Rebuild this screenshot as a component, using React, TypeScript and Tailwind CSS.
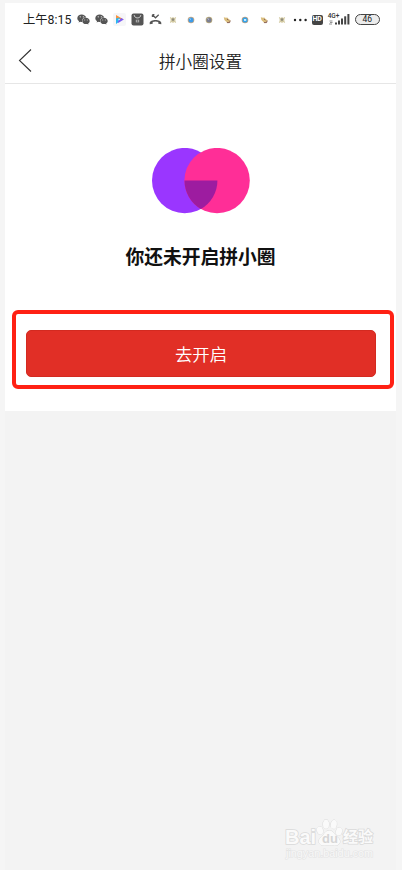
import { FaWeixin } from "react-icons/fa";

const notifications = [
  { id: 1, main: "#c9bd8a", accent: "#8f8b7c", shape: "flower" },
  { id: 2, main: "#3d9be9", accent: "#c9a983", shape: "dot" },
  { id: 3, main: "#7c7f92", accent: "#b9aa7c", shape: "dot" },
  { id: 4, main: "#d9bd7c", accent: "#8a6156", shape: "shell" },
  { id: 5, main: "#2fa4ee", accent: "#b79f86", shape: "ring" },
  { id: 6, main: "#d9bd7c", accent: "#8a6156", shape: "shell" },
  { id: 7, main: "#c9bd8a", accent: "#8f8b7c", shape: "flower" },
];

const NotificationIcon = ({ main, accent, shape }: { main: string; accent: string; shape: string }) => (
  <svg viewBox="0 0 8 8" className="h-2 w-2">
    {shape === "flower" && (
      <>
        <path d="M1.2 1.5 6.8 6.5M6.8 1.5 1.2 6.5M4 1v6M1.2 4h5.6" stroke={main} strokeWidth="1.2" opacity=".8" />
        <circle cx="4" cy="3.6" r="1.3" fill={accent} />
      </>
    )}
    {(shape === "dot" || shape === "ring") && (
      <>
        <circle cx="4" cy="4" r="3.3" fill={accent} />
        <circle cx="4" cy="4" r="2.5" fill={main} />
        {shape === "ring" ? (
          <rect x="3" y="3.2" width="2.2" height="1.5" fill="#fff" />
        ) : (
          <path d="M2.5 2.5 4 3.5" stroke="#fff" strokeWidth=".8" opacity=".7" />
        )}
      </>
    )}
    {shape === "shell" && (
      <>
        <path d="M.8 1.2 3 1.8 4.4 1.4 5.2 3 3 5.4 1.4 4Z" fill={main} />
        <path d="M2.6 4.6 5 2.4 7.4 4.2 6.6 6.8 3.6 6.6Z" fill={main} />
        <path d="M4 3 5.4 4M4 6.6h2.6L7.2 4.6" fill="none" stroke={accent} strokeWidth="1" />
      </>
    )}
  </svg>
);

const StatusBar = () => {
  return (
    <div className="flex h-[33px] items-center pl-[18px]">
      <span className="w-[54px] shrink-0 pt-[2px] whitespace-nowrap text-[12.3px] leading-none text-[#222]">上午8:15</span>
      <div className="flex shrink-0 items-center">
        <span className="flex w-[18px]">
          <FaWeixin className="h-[13px] w-[13px] text-[#555]" />
        </span>
        <span className="flex w-[18px]">
          <FaWeixin className="h-[13px] w-[13px] text-[#555]" />
        </span>
        <span className="flex w-[18px]">
          <svg viewBox="0 0 13 13" className="h-[13px] w-[13px]">
            <rect width="13" height="13" rx="2" fill="#f6f6f8" />
            <path d="M3 2v4L10.8 6.5Z" fill="#fb923c" />
            <path d="M3 5.5V11L6.5 8.6V4.6Z" fill="#2cb5ee" />
            <path d="M5 8.2 8.3 5 10.8 6.5 5.2 10Z" fill="#7c5cf0" />
            <path d="M5.5 5.8 7 6.6 5.5 7.6Z" fill="#fff" />
          </svg>
        </span>
        <span className="flex w-[18px]">
          <svg viewBox="0 0 13 13" className="h-[13px] w-[13px]">
            <rect x=".5" y=".5" width="12" height="12" rx="2" fill="#555" />
            <path d="M3.2 2.2c.4 3.6 6.2 3.6 6.6 0" fill="none" stroke="#ddd" strokeWidth="1" />
            <path d="M4.8 6.7h3.4v2.7H4.8Z" fill="#aaa" />
            <path d="M6.5 6.7v2.7" stroke="#666" strokeWidth=".7" />
          </svg>
        </span>
        <span className="flex w-[15px]">
          <svg viewBox="0 0 13 13" className="h-[13px] w-[13px] shrink-0">
            <path d="M3.4 1.7v2.2M3.4 1.7h2M3.6 2 6.5 4.8 9.7 1.8" fill="none" stroke="#555" strokeWidth="1.2" />
            <path d="M.7 9.9c0-4 11.6-4 11.6 0v1.3l-3-.4V8.9c-1.6-.7-4-.7-5.6 0v1.9l-3 .4Z" fill="#555" />
          </svg>
        </span>
        {notifications.map((item) => (
          <span key={item.id} className="flex w-[18.1px] justify-center">
            <NotificationIcon main={item.main} accent={item.accent} shape={item.shape} />
          </span>
        ))}
      </div>
      <svg viewBox="0 0 14 4" className="ml-[2px] h-1 w-[14px] shrink-0" fill="#222">
        <circle cx="2" cy="2" r="1.2" />
        <circle cx="7.3" cy="2" r="1.2" />
        <circle cx="12.6" cy="2" r="1.2" />
      </svg>
      <span className="ml-[5px] flex h-[10px] w-[11px] shrink-0 items-center justify-center rounded-[2px] bg-[#444] text-[7px] leading-none font-bold text-white">
        HD
      </span>
      <div className="relative ml-[5px] h-[13px] w-[22px] shrink-0">
        <span className="absolute top-0 left-0 text-[6.5px] leading-none font-medium text-[#333]">4G+</span>
        <svg viewBox="0 0 22 13" className="absolute inset-0 h-[13px] w-[22px]" fill="#444">
          <path d="M1.5 8h3M2 9.5h2.5M1 11h3" stroke="#777" strokeWidth=".8" />
          <rect x="7" y="9.5" width="2" height="2" />
          <rect x="10" y="7.5" width="2" height="4" />
          <rect x="13" y="5.5" width="2" height="6" />
          <rect x="16.2" y="3.3" width="2" height="8.2" />
          <rect x="19.4" y="1" width="2" height="10.5" />
        </svg>
      </div>
      <span className="ml-[5px] flex h-[11px] w-[25px] shrink-0 items-center justify-center rounded-full border border-[#444] bg-[#ececec] text-[8.5px] leading-none text-[#222]">
        46
      </span>
    </div>
  );
};

const Header = () => {
  return (
    <header className="flex h-[48px] items-center border-b border-[#e6e6e6] text-[#222]">
      <button className="w-[60px] pl-[13px]" aria-label="返回">
        <svg viewBox="0 0 14 24" className="h-6 w-[14px]" fill="none" stroke="#333" strokeWidth="1.1">
          <path d="M13 1.5 1.5 12.5 13 23.5" />
        </svg>
      </button>
      <h1 className="flex-1 pt-[7px] text-center text-[16.6px] leading-none font-[350]">拼小圈设置</h1>
      <div className="w-[60px]" />
    </header>
  );
};

const CirclesLogo = () => (
  <svg viewBox="0 0 98 66" className="h-[66px] w-[98px]">
    <circle cx="32.7" cy="32.6" r="32.7" fill="#9a36ff" />
    <circle cx="65.1" cy="32.6" r="32.7" fill="#ff2e97" />
    <path d="M32.5 32.6H65.4A32.7 32.7 0 0 1 48.9 61 32.7 32.7 0 0 1 32.5 32.6Z" fill="#9d1ca0" />
  </svg>
);

const Watermark = () => (
  <div className="mr-[14px] mb-[10px] ml-auto w-[97px] text-[#fafafa] [paint-order:stroke_fill] [-webkit-text-stroke:1.6px_#dadada]">
    <div className="flex h-[28px] items-end">
      <span className="w-[31px] font-['Liberation_Sans'] text-[20px] leading-[20px] font-bold">Bai</span>
      <div className="relative h-[28px] w-[27px] shrink-0">
        <svg viewBox="0 0 27 28" className="h-[28px] w-[27px]" fill="#fafafa" stroke="#d8d8d8" strokeWidth=".9">
          <ellipse cx="4" cy="11.5" rx="3" ry="4" transform="rotate(-12 4 11.5)" />
          <ellipse cx="10" cy="5.2" rx="3" ry="4.5" />
          <ellipse cx="17.8" cy="5.4" rx="3" ry="4.4" transform="rotate(10 17.8 5.4)" />
          <ellipse cx="23" cy="12.5" rx="3" ry="4" transform="rotate(12 23 12.5)" />
          <path d="M13.3 11.5c4 0 5 4 8 6.5 5 4 2.5 9-3 8.5-3.5-.5-6-.5-9.5 0-6 .6-8-5-3.6-8.5 3-2.4 4-6.5 8.1-6.5Z" />
        </svg>
        <span className="absolute top-[13px] left-[6px] font-['Liberation_Sans'] text-[13px] leading-none font-bold text-[#d6d6d6] [-webkit-text-stroke:0]">
          du
        </span>
      </div>
      <span className="shrink-0 text-[15px] leading-[20px] font-bold">经验</span>
    </div>
    <div className="pl-[1px] font-['Liberation_Sans'] text-[10.8px] leading-[13px] whitespace-nowrap text-[#f8f8f8] [-webkit-text-stroke:1.2px_#e4e4e4]">
      jingyan.baidu.com
    </div>
  </div>
);

export default function App() {
  return (
    <div className="flex h-[870px] w-[402px] flex-col bg-[#f5f5f5] pt-[3px] pr-[6px] pl-[5px] font-['Roboto','Noto_Sans_CJK_SC',sans-serif]">
      <div className="flex h-[408px] shrink-0 flex-col bg-white">
        <StatusBar />
        <Header />
        <section className="flex flex-col items-center pt-[64px]">
          <CirclesLogo />
          <h2 className="mt-[34px] text-[18.8px] leading-[20px] font-bold text-[#111]">你还未开启拼小圈</h2>
        </section>
        <div className="mt-[42px] mr-[2px] ml-[7px] h-[79px] rounded-[6px] border-[4px] border-[#ff2114] px-[10px] pt-[16px]">
          <button className="block h-[47px] w-[350px] rounded-[5px] border border-[#d32a20] bg-[#e12f26] pt-[1px] text-[17.4px] leading-[46px] font-[350] text-white">
            去开启
          </button>
        </div>
      </div>
      <div className="flex flex-1 flex-col justify-end bg-[#f3f3f3]">
        <Watermark />
      </div>
    </div>
  );
}
